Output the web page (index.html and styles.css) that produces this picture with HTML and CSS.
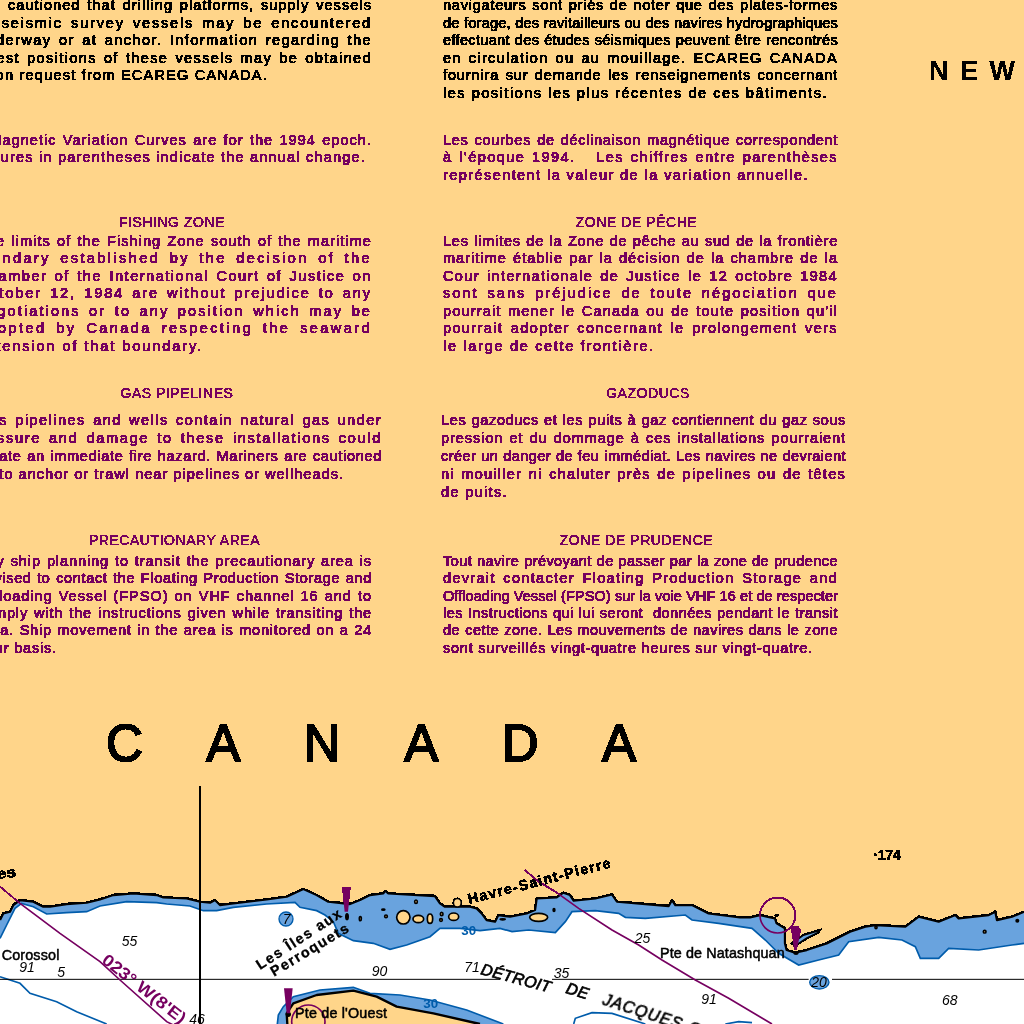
FILE: index.html
```html
<!DOCTYPE html>
<html lang="en">
<head>
<meta charset="utf-8">
<title>Canadian chart notes</title>
<link rel="stylesheet" href="styles.css">
</head>
<body>
<main class="sheet">
  <div class="notes crisp">
    <section class="note ink">
      <div class="l">are cautioned that drilling platforms, supply vessels</div>
      <div class="l">or seismic survey vessels may be encountered</div>
      <div class="l">underway or at anchor. Information regarding the</div>
      <div class="l">latest positions of these vessels may be obtained</div>
      <div class="l end" data-w="291">upon request from ECAREG CANADA.</div>
    </section>
    <section class="note ink">
      <div class="l">navigateurs sont priés de noter que des plates-formes</div>
      <div class="l">de forage, des ravitailleurs ou des navires hydrographiques</div>
      <div class="l">effectuant des études séismiques peuvent être rencontrés</div>
      <div class="l">en circulation ou au mouillage. ECAREG CANADA</div>
      <div class="l">fournira sur demande les renseignements concernant</div>
      <div class="l end" data-w="385">les positions les plus récentes de ces bâtiments.</div>
    </section>

    <section class="note">
      <div class="l over-far">The Magnetic Variation Curves are for the 1994 epoch.</div>
      <div class="l end" data-w="389">Figures in parentheses indicate the annual change.</div>
    </section>
    <section class="note">
      <div class="l">Les courbes de déclinaison magnétique correspondent</div>
      <div class="l">à l'époque 1994.   Les chiffres entre parenthèses</div>
      <div class="l end" data-w="366">représentent la valeur de la variation annuelle.</div>
    </section>

    <section class="note">
      <h2 class="title pull-s">FISHING ZONE</h2>
      <div class="l">The limits of the Fishing Zone south of the maritime</div>
      <div class="l over">boundary established by the decision of the</div>
      <div class="l">Chamber of the International Court of Justice on</div>
      <div class="l">October 12, 1984 are without prejudice to any</div>
      <div class="l">negotiations or to any position which may be</div>
      <div class="l">adopted by Canada respecting the seaward</div>
      <div class="l end" data-w="226">extension of that boundary.</div>
    </section>
    <section class="note">
      <h2 class="title pull-m">ZONE DE PÊCHE</h2>
      <div class="l">Les limites de la Zone de pêche au sud de la frontière</div>
      <div class="l">maritime établie par la décision de la chambre de la</div>
      <div class="l">Cour internationale de Justice le 12 octobre 1984</div>
      <div class="l">sont sans préjudice de toute négociation que</div>
      <div class="l">pourrait mener le Canada ou de toute position qu'il</div>
      <div class="l">pourrait adopter concernant le prolongement vers</div>
      <div class="l end" data-w="212">le large de cette frontière.</div>
    </section>

    <section class="note wide">
      <h2 class="title spaced pull-s">GAS PIPELINES</h2>
      <div class="l">Gas pipelines and wells contain natural gas under</div>
      <div class="l over">pressure and damage to these installations could</div>
      <div class="l">create an immediate fire hazard. Mariners are cautioned</div>
      <div class="l end over" data-w="373">not to anchor or trawl near pipelines or wellheads.</div>
    </section>
    <section class="note wide shifted">
      <h2 class="title spaced push">GAZODUCS</h2>
      <div class="l">Les gazoducs et les puits à gaz contiennent du gaz sous</div>
      <div class="l">pression et du dommage à ces installations pourraient</div>
      <div class="l">créer un danger de feu immédiat. Les navires ne devraient</div>
      <div class="l">ni mouiller ni chaluter près de pipelines ou de têtes</div>
      <div class="l end" data-w="67">de puits.</div>
    </section>

    <section class="note closing">
      <h2 class="title">PRECAUTIONARY AREA</h2>
      <div class="l">Any ship planning to transit the precautionary area is</div>
      <div class="l">advised to contact the Floating Production Storage and</div>
      <div class="l">Offloading Vessel (FPSO) on VHF channel 16 and to</div>
      <div class="l">comply with the instructions given while transiting the</div>
      <div class="l">area. Ship movement in the area is monitored on a 24</div>
      <div class="l end" data-w="80">hour basis.</div>
    </section>
    <section class="note closing">
      <h2 class="title pull-m">ZONE DE PRUDENCE</h2>
      <div class="l">Tout navire prévoyant de passer par la zone de prudence</div>
      <div class="l">devrait contacter Floating Production Storage and</div>
      <div class="l">Offloading Vessel (FPSO) sur la voie VHF 16 et de respecter</div>
      <div class="l">les Instructions qui lui seront  données pendant le transit</div>
      <div class="l">de cette zone. Les mouvements de navires dans le zone</div>
      <div class="l end" data-w="370">sont surveillés vingt-quatre heures sur vingt-quatre.</div>
    </section>
  </div>

  <p class="region-new crisp">NEW</p>
  <h1 class="region-canada crisp">CANADA</h1>

  <svg class="map" viewBox="0 0 3072 732" aria-label="Chart of the Quebec north shore">
    <defs>
      <filter id="alias" x="-5%" y="-5%" width="110%" height="110%" color-interpolation-filters="sRGB">
        <feComponentTransfer><feFuncA type="discrete" tableValues="0 1 1"/></feComponentTransfer>
      </filter>
    </defs>
    <g filter="url(#alias)">
    <path class="sea" d="M0,420 10,400 30,395 40,375 60,360 100,365 130,380 150,380 200,372 260,368 300,358 340,345 400,340 470,345 490,352 560,355 600,365 630,368 645,360 660,375 700,370 800,358 860,350 910,327 950,345 985,365 1050,372 1080,360 1110,345 1150,340 1155,332 1165,340 1305,348 1320,370 1335,380 1410,380 1430,385 1445,400 1460,420 1485,425 1495,405 1530,410 1580,400 1605,390 1610,355 1670,352 1690,338 1710,345 1721,362 1786,355 1836,343 1851,365 1936,372 2006,378 2016,360 2026,375 2076,375 2126,400 2220,412 2250,412 2280,405 2325,415 2330,430 2355,445 2355,490 2360,510 2385,518 2420,510 2480,490 2550,455 2596,440 2626,435 2716,440 2756,410 2816,425 2866,405 2876,415 2966,405 2986,395 2991,420 3036,410 3072,395 3072,732 0,732Z"/>
    <path class="shoal" d="M0,420 10,400 30,395 40,375 60,360 100,365 130,380 150,380 200,372 260,368 300,358 340,345 400,340 470,345 490,352 560,355 600,365 630,368 645,360 660,375 700,370 800,358 860,350 910,327 950,345 985,365 1050,372 1080,360 1110,345 1150,340 1155,332 1165,340 1305,348 1320,370 1335,380 1410,380 1430,385 1445,400 1460,420 1485,425 1495,405 1530,410 1580,400 1605,390 1610,355 1670,352 1690,338 1710,345 1721,362 1786,355 1836,343 1851,365 1936,372 2006,378 2016,360 2026,375 2076,375 2126,400 2220,412 2250,412 2280,405 2325,415 2330,430 2355,445 2355,490 2360,510 2385,518 2420,510 2480,490 2550,455 2596,440 2626,435 2716,440 2756,410 2816,425 2866,405 2876,415 2966,405 2986,395 2991,420 3036,410 3072,395 3072,490 3036,495 2936,510 2846,505 2816,535 2761,535 2746,500 2706,480 2636,472 2546,485 2516,525 2456,540 2396,555 2336,520 2296,480 2256,445 2156,430 2076,420 2056,405 1936,415 1876,412 1856,400 1786,392 1716,395 1696,425 1666,458 1586,450 1536,455 1500,445 1440,452 1380,445 1320,445 1290,470 1220,495 1170,508 1120,490 1060,482 1015,460 1000,425 975,405 950,392 900,382 885,367 800,372 700,382 650,392 610,392 570,378 500,372 470,368 380,365 300,378 260,395 200,398 140,402 100,380 65,370 45,385 20,435 0,475Z"/>
    <path class="depth" d="M0,475 20,435 45,385 65,370 100,380 140,402 200,398 260,395 300,378 380,365 470,368 500,372 570,378 610,392 650,392 700,382 800,372 885,367 900,382 950,392 975,405 1000,425 1015,460 1060,482 1120,490 1170,508 1220,495 1290,470 1320,445 1380,445 1440,452 1500,445 1536,455 1586,450 1666,458 1696,425 1716,395 1786,392 1856,400 1876,412 1936,415 2056,405 2076,420 2156,430 2256,445 2296,480 2336,520 2396,555 2456,540 2516,525 2546,485 2636,472 2706,480 2746,500 2761,535 2816,535 2846,505 2936,510 3036,495 3072,490"/>
    <path class="depth" d="M0,590 60,610 90,640 170,665 230,695 320,732"/>
    <path class="depth" d="M1721,732 1726,715 1776,698 1836,700 1936,732"/>
    <path class="depth" d="M2176,732 2216,725 2256,728"/>

    <path class="shoal" d="M832,732 835,705 850,680 880,650 960,630 1060,622 1110,640 1200,645 1290,660 1400,690 1510,732Z"/>
    <path class="depth" d="M832,732 835,705 850,680 880,650 960,630 1060,622 1110,640 1200,645 1290,660 1400,690 1510,732"/>
    <path class="land" d="M862,732 860,700 880,670 950,645 1060,632 1130,650 1190,680 1300,700 1440,732Z"/>
    <path class="coast" d="M862,732 860,700 880,670 950,645 1060,632 1130,650 1190,680 1300,700 1440,732"/>

    <path class="coast" d="M0,420 10,400 30,395 40,375 60,360 100,365 130,380 150,380 200,372 260,368 300,358 340,345 400,340 470,345 490,352 560,355 600,365 630,368 645,360 660,375 700,370 800,358 860,350 910,327 950,345 985,365 1050,372 1080,360 1110,345 1150,340 1155,332 1165,340 1305,348 1320,370 1335,380 1410,380 1430,385 1445,400 1460,420 1485,425 1495,405 1530,410 1580,400 1605,390 1610,355 1670,352 1690,338 1710,345 1721,362 1786,355 1836,343 1851,365 1936,372 2006,378 2016,360 2026,375 2076,375 2126,400 2220,412 2250,412 2280,405 2325,415 2330,430 2355,445 2355,490 2360,510 2385,518 2420,510 2480,490 2550,455 2596,440 2626,435 2716,440 2756,410 2816,425 2866,405 2876,415 2966,405 2986,395 2991,420 3036,410 3072,395"/>
    <path class="lagoon" d="M2375,490 2410,465 2460,450 2455,458 2420,475 2385,498Z"/>

    <g class="isles">
      <ellipse cx="1210" cy="412" rx="20" ry="20"/>
      <ellipse cx="1255" cy="417" rx="16" ry="11"/>
      <ellipse cx="1290" cy="416" rx="8" ry="14"/>
      <ellipse cx="1325" cy="402" rx="4" ry="5"/>
      <ellipse cx="1323" cy="420" rx="4" ry="4"/>
      <ellipse cx="1361" cy="410" rx="15" ry="11"/>
      <ellipse cx="1372" cy="368" rx="12" ry="13"/>
      <ellipse cx="1158" cy="409" rx="4" ry="4"/>
      <ellipse cx="1081" cy="416" rx="3" ry="6"/>
      <ellipse cx="1248" cy="365" rx="4" ry="5"/>
      <ellipse cx="1616" cy="412" rx="27" ry="12"/>
      <ellipse cx="2628" cy="442" rx="3" ry="4"/>
      <ellipse cx="2954" cy="455" rx="4" ry="4"/>
    </g>
    <g class="rocks">
      <ellipse cx="1150" cy="389" rx="7" ry="4"/>
      <ellipse cx="1041" cy="410" rx="6" ry="11"/>
      <ellipse cx="1662" cy="390" rx="5" ry="7"/>
      <ellipse cx="1508" cy="418" rx="10" ry="4"/>
      <ellipse cx="865" cy="703" rx="8" ry="8"/>
      <ellipse cx="2388" cy="520" rx="8" ry="5"/>
      <ellipse cx="2330" cy="406" rx="7" ry="4"/>
      <ellipse cx="3052" cy="422" rx="6" ry="6"/>
    </g>

    <path class="grid-line" d="M0,598H1500M1656,598H2426M2496,598H3072"/>
    <path class="meridian" d="M600,18V732"/>

    <path class="variation" d="M0,320 60,370 180,460 300,545 360,600 500,725 530,740"/>
    <path class="variation" d="M1574,270 1616,305 1666,335 1736,385 1836,450 1916,495 1986,540 2086,600 2186,655 2316,732"/>
    <circle class="variation" cx="2333" cy="406" r="53"/>
    <circle class="variation" cx="925" cy="725" r="50"/>
    <path class="beacon" d="M1026,322H1052L1044,395H1034Z"/>
    <path class="beacon" d="M852,625H878L870,700H860Z"/>
    <path class="beacon" d="M2375,438 2395,438 2403,450 2398,475 2390,510 2382,510 2377,470 2373,450Z"/>

    <text class="lbl strong" transform="translate(-8 297) rotate(-8)" textLength="58" lengthAdjust="spacingAndGlyphs">es</text>
    <text class="lbl" x="5" y="541" textLength="173">Corossol</text>
    <text class="lbl" x="885" y="715" textLength="276">Pte de l'Ouest</text>
    <text class="lbl" x="1980" y="534" textLength="374">Pte de Natashquan</text>
    <text class="lbl strong" x="2620" y="240" textLength="82">·174</text>
    <text class="lbl strong" transform="translate(780 570) rotate(-33)" textLength="295">Les Îles aux</text>
    <text class="lbl strong" transform="translate(822 590) rotate(-31)" textLength="265">Perroquets</text>
    <text class="lbl strong" transform="translate(1408 372) rotate(-14.5)" textLength="440">Havre-Saint-Pierre</text>

    <g class="sounding">
      <text x="58" y="575">91</text>
      <text x="172" y="590">5</text>
      <text x="365" y="499">55</text>
      <text x="568" y="732">46</text>
      <text x="1115" y="587">90</text>
      <text x="1393" y="575">71</text>
      <text x="1904" y="490">25</text>
      <text x="1661" y="595">35</text>
      <text x="2104" y="672">91</text>
      <text x="2826" y="674">68</text>
    </g>

    <g class="blue-label">
      <text x="1384" y="464">30</text>
      <text x="1270" y="684">30</text>
    </g>
    <circle class="spot" cx="858" cy="417" r="21"/>
    <text class="sounding-in" x="848" y="433">7</text>
    <ellipse class="spot" cx="2458" cy="607" rx="29" ry="20"/>
    <text class="sounding-in" x="2434" y="622">20</text>

    <text class="strait" transform="translate(1440 582) rotate(15)" textLength="215">DÉTROIT</text>
    <text class="strait" transform="translate(1695 638) rotate(17)" textLength="68">DE</text>
    <text class="strait" transform="translate(1805 672) rotate(18)" textLength="500">JACQUES-CARTIER</text>
    <text class="magnote" transform="translate(302 546) rotate(38)" textLength="305" lengthAdjust="spacingAndGlyphs">023° W(8'E)</text>
    </g>
  </svg>
</main>
<script src="script.js"></script>
</body>
</html>
```

FILE: styles.css
```css
html, body {
  margin: 0;
  padding: 0;
}

body {
  background: #ffd58a;
}

.sheet {
  position: relative;
  display: flex;
  flex-direction: column;
  width: 1024px;
  height: 1024px;
  overflow: hidden;
  background: #ffd58a;
  font-family: "Liberation Sans", Arial, sans-serif;
}

.notes {
  display: grid;
  grid-template-columns: 395px 395px;
  column-gap: 71px;
  row-gap: 29.5px;
  margin: -3px 0 0 -23px;
  color: #760060;
  font-size: 14.5px;
  line-height: 17.5px;
  -webkit-text-stroke: 0.55px currentColor;
}

.note.ink {
  color: #000;
}

.note.wide {
  width: 405px;
  line-height: 17.9px;
}

.note.shifted {
  margin-left: -2px;
}

.note.closing {
  margin-top: 1px;
  line-height: 17.3px;
}

.l {
  text-align: justify;
  text-align-last: justify;
  white-space: pre-wrap;
}

.l.end {
  text-align-last: left;
}

.l.over {
  margin-left: -6px;
}

.l.over-far {
  margin-left: -22px;
}

.title {
  margin: 0 0 1.5px;
  font-size: 14px;
  line-height: 17.5px;
  font-weight: 400;
  text-align: center;
  letter-spacing: 0.55px;
  -webkit-text-stroke: 0.25px currentColor;
}

.title.spaced {
  margin-bottom: 10px;
}

.closing .title {
  margin-bottom: 3.5px;
}

.title.pull-s {
  padding-right: 5px;
}

.title.pull-m {
  padding-right: 8px;
}

.title.push {
  padding-left: 9px;
}

.region-new {
  position: absolute;
  top: 55px;
  left: 929px;
  margin: 0;
  font-size: 27px;
  line-height: 32px;
  font-weight: 700;
  letter-spacing: 11.5px;
  white-space: nowrap;
  color: #000;
}

.region-canada {
  margin: 57px 0 0 106px;
  font-size: 51px;
  line-height: 60px;
  font-weight: 400;
  letter-spacing: 63.5px;
  color: #000;
  white-space: nowrap;
  -webkit-text-stroke: 1.5px #000;
}

.map {
  display: block;
  width: 1024px;
  height: 244px;
  margin-top: auto;
}

.sea { fill: #fff; }
.shoal { fill: #69a3de; }
.land { fill: #ffd58a; }
.depth { fill: none; stroke: #005cab; stroke-width: 5; }
.coast { fill: none; stroke: #000; stroke-width: 7; stroke-linejoin: round; }
.lagoon { fill: #69a3de; stroke: #000; stroke-width: 6; }
.isles ellipse { fill: #ffd58a; stroke: #000; stroke-width: 5; }
.rocks ellipse { fill: #000; }
.grid-line { fill: none; stroke: #000; stroke-width: 3; }
.meridian { fill: none; stroke: #000; stroke-width: 6; }
.variation { fill: none; stroke: #760060; stroke-width: 5; }
.beacon { fill: #760060; }
.spot { fill: #69a3de; stroke: #005cab; stroke-width: 4; }

.lbl {
  font-family: "Liberation Sans", Arial, sans-serif;
  font-size: 43px;
  fill: #000;
  stroke: #000;
  stroke-width: 1.5;
}

.lbl.strong {
  font-weight: 700;
  stroke-width: 1;
}

.sounding text,
.sounding-in {
  font-family: "Liberation Sans", Arial, sans-serif;
  font-style: italic;
  font-size: 42px;
  fill: #000;
}

.blue-label text {
  font-family: "Liberation Sans", Arial, sans-serif;
  font-size: 40px;
  font-weight: 700;
  fill: #005cab;
}

.strait {
  font-family: "Liberation Sans", Arial, sans-serif;
  font-style: italic;
  font-size: 48px;
  fill: #000;
  stroke: #000;
  stroke-width: 2;
}

.magnote {
  font-family: "Liberation Sans", Arial, sans-serif;
  font-size: 50px;
  font-weight: 700;
  fill: #760060;
}
```

FILE: script.js
```js
// The chart's lettering is tracked out line by line so each line reaches its measured width.
document.querySelectorAll(".l").forEach(function (line) {
  var range = document.createRange();
  range.selectNodeContents(line);
  line.style.textAlignLast = "left";
  var natural = range.getBoundingClientRect().width;
  line.style.textAlignLast = "";
  var count = line.textContent.length;
  var target = Number(line.dataset.w) || line.getBoundingClientRect().width;
  var share = line.dataset.w ? 1 : 0.85;
  line.style.letterSpacing = (((target - natural) / count) * share).toFixed(3) + "px";
});

// Stylesheet url(#id) resolves against the stylesheet, so the same-document filter is attached here.
document.querySelectorAll(".crisp").forEach(function (el) {
  el.style.filter = "url(#alias)";
});
```
